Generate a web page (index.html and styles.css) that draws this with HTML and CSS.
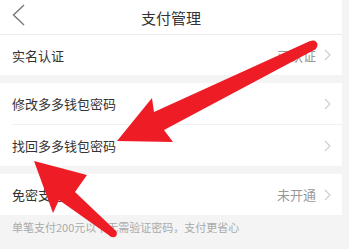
FILE: index.html
```html
<!DOCTYPE html>
<html lang="zh">
<head>
<meta charset="utf-8">
<link rel="stylesheet" href="styles.css">
</head>
<body>
<div class="page">
  <header class="nav">
    <svg class="back" width="14" height="22" viewBox="0 0 14 22"><polyline points="12,1 1.5,11 12,21" fill="none" stroke="#777" stroke-width="1.4"/></svg>
    <div class="title">支付管理</div>
  </header>
  <section class="group">
    <div class="row"><span class="label">实名认证</span><span class="right"><span class="value">已认证</span><svg class="chev" width="7" height="12" viewBox="0 0 7 12"><polyline points="1,1 6,6 1,11" fill="none" stroke="#ccc" stroke-width="1.1"/></svg></span></div>
  </section>
  <section class="group">
    <div class="row"><span class="label">修改多多钱包密码</span><span class="right"><svg class="chev" width="7" height="12" viewBox="0 0 7 12"><polyline points="1,1 6,6 1,11" fill="none" stroke="#ccc" stroke-width="1.1"/></svg></span></div>
    <div class="divider"></div>
    <div class="row"><span class="label">找回多多钱包密码</span><span class="right"><svg class="chev" width="7" height="12" viewBox="0 0 7 12"><polyline points="1,1 6,6 1,11" fill="none" stroke="#ccc" stroke-width="1.1"/></svg></span></div>
  </section>
  <section class="group">
    <div class="row"><span class="label">免密支付</span><span class="right"><span class="value">未开通</span><svg class="chev" width="7" height="12" viewBox="0 0 7 12"><polyline points="1,1 6,6 1,11" fill="none" stroke="#ccc" stroke-width="1.1"/></svg></span></div>
  </section>
  <p class="note">单笔支付200元以下无需验证密码，支付更省心</p>
</div>
<svg class="arrows" width="349" height="249" viewBox="0 0 349 249">
  <polygon fill="#ee1c25" points="117,141 152,98 154,112 310,41 316,49 164,130 173,142"/>
  <circle cx="313" cy="45" r="4.5" fill="#ee1c25"/>
  <polygon fill="#ee1c25" points="34,161 87,175 75,192 116,231 110,236 59,200 53,213"/>
  <circle cx="113" cy="233.5" r="3.8" fill="#ee1c25"/>
</svg>
</body>
</html>
```

FILE: styles.css
```css
html, body {
  margin: 0;
  padding: 0;
}
body {
  width: 349px;
  height: 249px;
  overflow: hidden;
  background: #f4f4f4;
  font-family: "Noto Sans CJK SC", "Noto Sans", sans-serif;
  position: relative;
}
.page {
  width: 342px;
  display: flex;
  flex-direction: column;
}
.nav {
  height: 34px;
  background: #fff;
  border-bottom: 1px solid #ececec;
  display: flex;
  align-items: center;
  justify-content: center;
  position: relative;
}
.back {
  position: absolute;
  left: 12px;
  top: 4px;
}
.title {
  font-size: 15px;
  color: #333;
}
.group {
  background: #fff;
  margin-bottom: 8px;
  display: flex;
  flex-direction: column;
}
.group:first-of-type .row {
  height: 40px;
}
.row {
  height: 41px;
  display: flex;
  align-items: center;
  justify-content: space-between;
  padding: 0 11px 0 12px;
}
.label {
  font-size: 13px;
  color: #333;
}
.right {
  display: flex;
  align-items: center;
  gap: 8px;
}
.value {
  font-size: 13px;
  color: #999;
}
.divider {
  height: 1px;
  background: #f0f0f0;
  margin-left: 12px;
}
.note {
  margin: -4px 0 0 12px;
  font-size: 11px;
  line-height: 16px;
  color: #aaa;
}
.arrows {
  position: absolute;
  left: 0;
  top: 0;
}
```
